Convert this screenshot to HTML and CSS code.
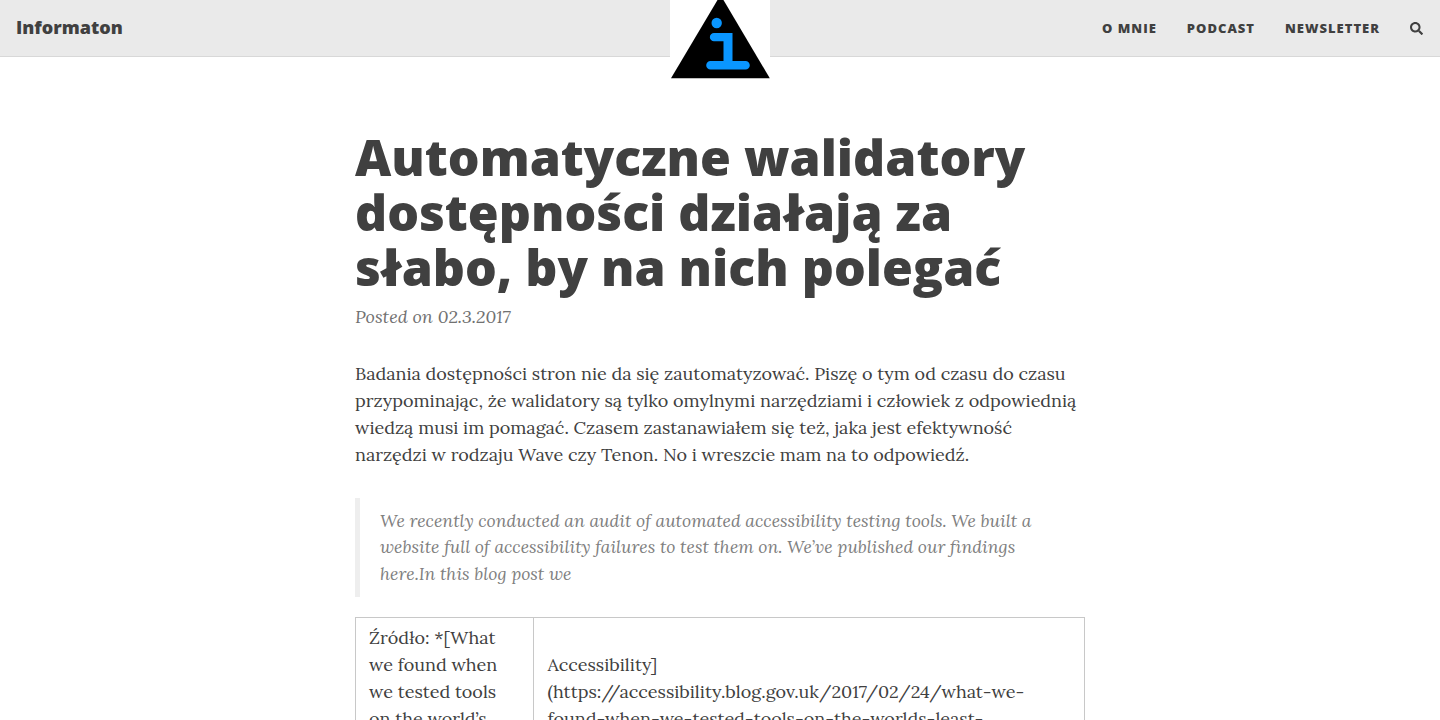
FILE: index.html
```html
<!DOCTYPE html>
<html lang="pl">
<head>
<meta charset="utf-8">
<title>Automatyczne walidatory dostępności działają za słabo, by na nich polegać</title>
<link rel="stylesheet" href="styles.css">
</head>
<body>
<nav class="navbar">
  <a class="brand">Informaton</a>
  <div class="menu">
    <a>O mnie</a>
    <a>Podcast</a>
    <a>Newsletter</a>
    <svg class="search" viewBox="0 0 512 512"><path d="M505 442.700L405.300 343c-4.500-4.500-10.600-7-17-7H372c27.600-35.300 44-79.700 44-128C416 93.100 322.900 0 208 0S0 93.100 0 208s93.100 208 208 208c48.300 0 92.700-16.400 128-44v16.300c0 6.400 2.500 12.500 7 17l99.700 99.700c9.400 9.400 24.600 9.400 33.900 0l28.300-28.300c9.400-9.400 9.400-24.600.1-34zM208 336c-70.700 0-128-57.200-128-128 0-70.700 57.200-128 128-128 70.700 0 128 57.200 128 128 0 70.700-57.200 128-128 128z"/></svg>
  </div>
  <svg class="logo" viewBox="0 0 100 90">
    <rect width="100" height="90" fill="#fff"/>
    <path d="M50.500 -5L99.800 78.300H1Z" fill="#000"/>
    <g fill="#0a96ff"><circle cx="46.700" cy="23" r="5.200"/><path d="M44 33H62.500V61H75.500a4.300 4.300 0 0 1 0 8.600H40.500a4.300 4.300 0 0 1 0-8.600H53.500V41.300H44a4.150 4.150 0 0 1 0-8.300Z"/></g>
  </svg>
</nav>
<main class="post">
  <header>
    <h1 class="title">Automatyczne walidatory dostępności działają za słabo, by na nich polegać</h1>
    <p class="meta">Posted on 02.3.2017</p>
  </header>
  <p class="intro">Badania dostępności stron nie da się zautomatyzować. Piszę o tym od czasu do czasu przypominając, że walidatory są tylko omylnymi narzędziami i człowiek z odpowiednią wiedzą musi im pomagać. Czasem zastanawiałem się też, jaka jest efektywność narzędzi w rodzaju Wave czy Tenon. No i wreszcie mam na to odpowiedź.</p>
  <blockquote class="quote">We recently conducted an audit of automated accessibility testing tools. We built a website full of accessibility failures to test them on. We’ve published our findings here.In this blog post we</blockquote>
  <table class="source"><tr>
    <td class="what">Źródło: *[What we found when we tested tools on the world’s</td>
    <td class="link">Accessibility]<br>(https://accessibility.blog.gov.uk/2017/02/24/what-we-found-when-we-tested-tools-on-the-worlds-least-</td>
  </tr></table>
</main>
</body>
</html>
```

FILE: styles.css
```css
* { box-sizing: border-box; }
html, body { height: 720px; overflow: hidden; }
body { margin: 0; background: #fff; color: #404040; font: 18px/27px Lora, "Liberation Serif", serif; }
.navbar { position: relative; display: flex; align-items: center; justify-content: space-between; height: 57px; padding: 0 16px; background: #eaeaea; border-bottom: 1px solid #d8d8d8; font-family: "Open Sans", sans-serif; font-weight: 800; }
.brand { font-size: 18px; line-height: 27px; padding-bottom: 1px; }
.menu { display: flex; align-items: center; gap: 30px; padding-right: 1px; font-size: 13px; letter-spacing: 1px; text-transform: uppercase; }
.search { width: 13px; height: 13px; fill: #404040; }
.logo { position: absolute; left: 670px; top: 0; width: 100px; height: 90px; }
.post { width: 730px; margin: 0 auto; padding-top: 73px; }
.title { margin: 0; font: 800 50px/55px "Open Sans", sans-serif; }
.meta { margin: 8px 0 0; color: #717171; font-style: italic; }
.intro { margin: 30px 0; }
.quote { margin: 0 0 20px; padding: 10px 20px; border-left: 5px solid #eee; color: #808080; font-size: 17.6px; font-style: italic; line-height: 26.4px; }
.source { width: 100%; border-collapse: collapse; }
.source td { border: 1px solid #c8c8c8; padding: 6px 13px; vertical-align: top; }
.source .what { width: 178px; }
.source .link { padding-top: 33px; padding-left: 13.5px; }
```
